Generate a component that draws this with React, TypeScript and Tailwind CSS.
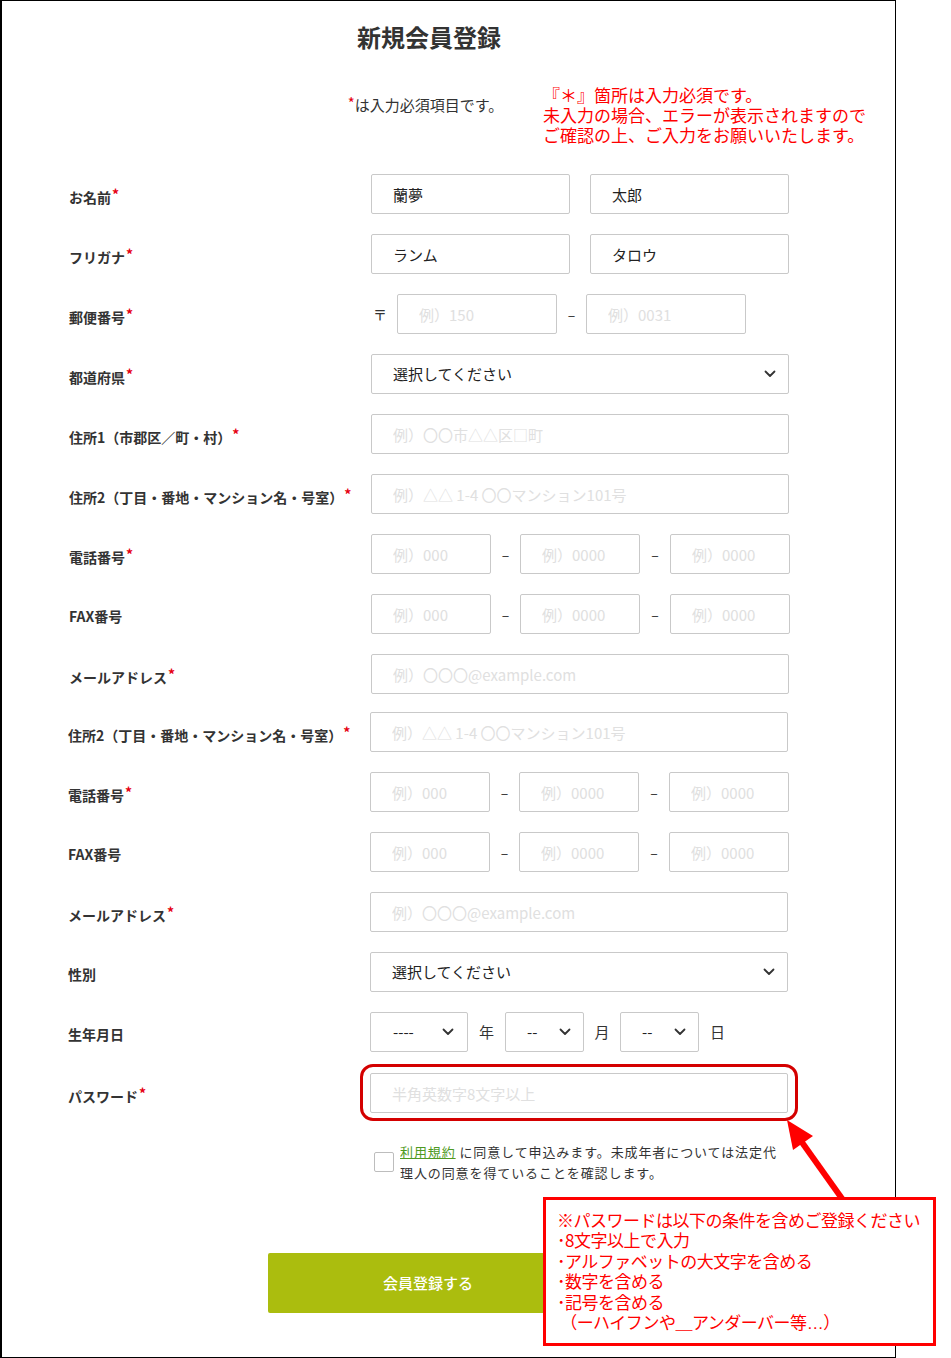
import React from "react";

const FONT = "font-['Noto_Sans_CJK_JP','Noto_Sans',sans-serif]";

function Req() {
  return <span className="text-[#e60012] text-[14px] align-[3px] ml-[1px]">*</span>;
}

function Label({ children, req }: { children: React.ReactNode; req?: boolean }) {
  return (
    <div className="w-[369px] shrink-0 pl-[67px] pt-[3px] text-[14px] font-bold leading-[20px] text-[#333] whitespace-nowrap">
      {children}
      {req && <Req />}
    </div>
  );
}

function Row({ label, req, children }: { label: string; req?: boolean; children: React.ReactNode }) {
  return (
    <div className="flex items-center h-[40px]">
      <Label req={req}>{label}</Label>
      <div className="flex items-center">{children}</div>
    </div>
  );
}

function Field({ w, value, ph }: { w: string; value?: string; ph?: string }) {
  return (
    <input
      readOnly
      value={value ?? ""}
      placeholder={ph}
      className={`${w} h-[40px] border border-[#c9c9c9] rounded-[2px] pl-[21px] text-[15px] text-[#222] placeholder:text-[#e0e0e0] outline-none bg-white`}
    />
  );
}

function Chevron() {
  return (
    <svg width="12" height="8" viewBox="0 0 12 8" className="shrink-0">
      <path d="M1.5 1.5 L6 6 L10.5 1.5" fill="none" stroke="#333" strokeWidth="1.8" strokeLinecap="round" strokeLinejoin="round" />
    </svg>
  );
}

function Select({ w, text, pl, pr }: { w: string; text: string; pl: string; pr: string }) {
  return (
    <div className={`${w} ${pl} ${pr} h-[40px] border border-[#c9c9c9] rounded-[2px] bg-white flex items-center justify-between text-[15px] text-[#222]`}>
      <span>{text}</span>
      <Chevron />
    </div>
  );
}

function Dash() {
  return <span className="w-[29px] text-center text-[14px] text-[#333]">–</span>;
}

function Phone() {
  return (
    <>
      <Field w="w-[120px]" ph="例）000" />
      <Dash />
      <Field w="w-[120px]" ph="例）0000" />
      <span className="w-[30px] text-center text-[14px] text-[#333]">–</span>
      <Field w="w-[120px]" ph="例）0000" />
    </>
  );
}

export default function App() {
  return (
    <div className={`relative w-[951px] h-[1358px] bg-white ${FONT} text-[#333]`}>
      <div className="w-[896px] h-[1358px] border border-l-2 border-black">
        <div className="w-[854px] flex flex-col">
          <h1 className="mt-[18px] text-center text-[24px] font-bold leading-[36px] text-[#333]">新規会員登録</h1>
          <p className="mt-[38px] pr-[7px] text-center text-[15px] leading-[20px] text-[#333]">
            <span className="text-[#e60012] align-[2px]">*</span>は入力必須項目です。
          </p>

          <div className="mt-[59px] flex flex-col gap-[20px]">
            <Row label="お名前" req>
              <div className="flex gap-[20px]">
                <Field w="w-[199px]" value="蘭夢" />
                <Field w="w-[199px]" value="太郎" />
              </div>
            </Row>
            <Row label="フリガナ" req>
              <div className="flex gap-[20px]">
                <Field w="w-[199px]" value="ランム" />
                <Field w="w-[199px]" value="タロウ" />
              </div>
            </Row>
            <Row label="郵便番号" req>
              <span className="w-[26px] pl-[2px] text-[14px] text-[#333]">〒</span>
              <Field w="w-[160px]" ph="例）150" />
              <Dash />
              <Field w="w-[160px]" ph="例）0031" />
            </Row>
            <Row label="都道府県" req>
              <Select w="w-[418px]" text="選択してください" pl="pl-[21px]" pr="pr-[12px]" />
            </Row>
            <Row label="住所1（市郡区／町・村）" req>
              <Field w="w-[418px]" ph="例）〇〇市△△区□町" />
            </Row>
            <Row label="住所2（丁目・番地・マンション名・号室）" req>
              <Field w="w-[418px]" ph="例）△△ 1-4 〇〇マンション101号" />
            </Row>
            <Row label="電話番号" req>
              <Phone />
            </Row>
            <Row label="FAX番号">
              <Phone />
            </Row>
            <Row label="メールアドレス" req>
              <Field w="w-[418px]" ph="例）〇〇〇@example.com" />
            </Row>
          </div>

          <div className="mt-[18px] -ml-[1px] flex flex-col gap-[20px]">
            <Row label="住所2（丁目・番地・マンション名・号室）" req>
              <Field w="w-[418px]" ph="例）△△ 1-4 〇〇マンション101号" />
            </Row>
            <Row label="電話番号" req>
              <Phone />
            </Row>
            <Row label="FAX番号">
              <Phone />
            </Row>
            <Row label="メールアドレス" req>
              <Field w="w-[418px]" ph="例）〇〇〇@example.com" />
            </Row>
            <Row label="性別">
              <Select w="w-[418px]" text="選択してください" pl="pl-[21px]" pr="pr-[12px]" />
            </Row>
            <Row label="生年月日">
              <Select w="w-[98px]" text="----" pl="pl-[22px]" pr="pr-[13px]" />
              <span className="w-[37px] text-center text-[15px] text-[#333]">年</span>
              <Select w="w-[79px]" text="--" pl="pl-[21px]" pr="pr-[12px]" />
              <span className="w-[36px] text-center text-[15px] text-[#333]">月</span>
              <Select w="w-[79px]" text="--" pl="pl-[21px]" pr="pr-[12px]" />
              <span className="pl-[11px] text-[15px] text-[#333]">日</span>
            </Row>
          </div>

          <div className="mt-[21px] -ml-[1px]">
            <Row label="パスワード" req>
              <div className="relative">
                <Field w="w-[418px]" ph="半角英数字8文字以上" />
                <span className="absolute -left-[10px] -top-[9px] -right-[10px] -bottom-[8px] border-[3px] border-[#d40000] rounded-[13px] pointer-events-none" />
              </div>
            </Row>
          </div>

          <div className="mt-[28px] ml-[372px] flex items-center gap-[6px]">
            <span className="w-[20px] h-[20px] border border-[#bdbdbd] rounded-[2px] bg-white shrink-0" />
            <p className="text-[13px] leading-[21px] tracking-[0.9px] text-[#333] whitespace-nowrap">
              <span className="text-[#4f9a23] underline">利用規約</span> に同意して申込みます。未成年者については法定代
              <br />
              理人の同意を得ていることを確認します。
            </p>
          </div>

          <button className="mt-[70px] ml-[266px] w-[320px] h-[60px] rounded-[2px] bg-[#abbd0e] text-white text-[15px] font-medium">
            会員登録する
          </button>
        </div>
      </div>

      {/* annotation: top */}
      <div className="absolute left-[543px] top-[85px] text-[17px] leading-[20px] text-[#ff0000] whitespace-nowrap">
        『＊』箇所は入力必須です。
        <br />
        未入力の場合、エラーが表示されますので
        <br />
        ご確認の上、ご入力をお願いいたします。
      </div>

      {/* arrow */}
      <svg className="absolute left-[780px] top-[1112px]" width="80" height="90" viewBox="0 0 80 90">
        <line x1="63" y1="88" x2="21" y2="29" stroke="#ff0000" strokeWidth="6" />
        <polygon points="7,8 33,24 13,38" fill="#ff0000" />
      </svg>

      {/* annotation: password rules */}
      <div className="absolute left-[543px] top-[1197px] w-[393px] h-[149px] border-[3px] border-[#ff0000] bg-white pl-[11px] pt-[10px] text-[17px] leading-[20.4px] tracking-[-0.5px] text-[#ff0000] whitespace-nowrap">
        <div>※パスワードは以下の条件を含めご登録ください</div>
        <div>･8文字以上で入力</div>
        <div>･アルファベットの大文字を含める</div>
        <div>･数字を含める</div>
        <div>･記号を含める</div>
        <div>
          &nbsp;（ーハイフンや＿アンダーバー等<span className="font-['Liberation_Sans',sans-serif]">…</span>）
        </div>
      </div>
    </div>
  );
}
